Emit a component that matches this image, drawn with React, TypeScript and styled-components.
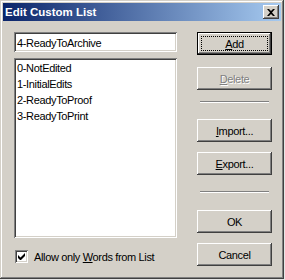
import styled, { createGlobalStyle } from "styled-components";

const GlobalStyle = createGlobalStyle`
  html, body {
    margin: 0;
    padding: 0;
    background: #e6e6e6;
  }
  * {
    box-sizing: border-box;
  }
`;

const items = ["0-NotEdited", "1-InitialEdits", "2-ReadyToProof", "3-ReadyToPrint"];

const App = () => {
  return (
    <>
      <GlobalStyle />
      <Window>
        <TitleBar>
          <span>Edit Custom List</span>
          <CloseBtn>
            <svg width="8" height="7" viewBox="0 0 8 7">
              <path d="M0 0h2l2 2 2-2h2L5 3.5 8 7H6L4 5 2 7H0l3-3.5z" fill="#000" />
            </svg>
          </CloseBtn>
        </TitleBar>
        <Body>
          <LeftCol>
            <TextBox>4-ReadyToArchive</TextBox>
            <ListBox>
              {items.map((item) => (
                <ListItem key={item}>{item}</ListItem>
              ))}
            </ListBox>
            <CheckRow>
              <CheckBox>
                <svg width="7" height="7" viewBox="0 0 7 7">
                  <path d="M0 2v3l2 2h1l4-4V0L2.5 4.5z" fill="#000" />
                </svg>
              </CheckBox>
              <Label>
                Allow only <u>W</u>ords from List
              </Label>
            </CheckRow>
          </LeftCol>
          <RightCol>
            <Button $default>
              <u>A</u>dd
            </Button>
            <Button $disabled $top={12}>
              <u>D</u>elete
            </Button>
            <Separator $top={11} />
            <Button $top={16}>
              <u>I</u>mport...
            </Button>
            <Button $top={10}>
              <u>E</u>xport...
            </Button>
            <Separator $top={16} />
            <Button $top={17}>OK</Button>
            <Button $top={10}>Cancel</Button>
          </RightCol>
        </Body>
      </Window>
    </>
  );
};

const Window = styled.div`
  width: 284px;
  height: 279px;
  padding: 3px;
  display: flex;
  flex-direction: column;
  background: #d4d0c8;
  box-shadow: inset -1px -1px #404040, inset 1px 1px #d4d0c8,
    inset -2px -2px #808080, inset 2px 2px #ffffff;
  font-family: "Liberation Sans", Arial, sans-serif;
  font-size: 11px;
  letter-spacing: -0.35px;
  color: #000;
`;

const TitleBar = styled.div`
  height: 18px;
  display: flex;
  align-items: center;
  justify-content: space-between;
  padding: 0 2px 0 2px;
  background: linear-gradient(to right, #0a246a, #a6caf0);
  color: #fff;
  font-weight: bold;
  font-size: 11.5px;
  letter-spacing: 0;
`;

const CloseBtn = styled.div`
  width: 16px;
  height: 14px;
  display: flex;
  align-items: center;
  justify-content: center;
  background: #d4d0c8;
  box-shadow: inset -1px -1px #404040, inset 1px 1px #ffffff,
    inset -2px -2px #808080, inset 2px 2px #d4d0c8;
`;

const Body = styled.div`
  flex: 1;
  display: flex;
  gap: 20px;
  padding: 11px 0 0 11px;
`;

const LeftCol = styled.div`
  width: 163px;
  display: flex;
  flex-direction: column;
`;

const sunken = `
  background: #fff;
  box-shadow: inset 1px 1px #808080, inset -1px -1px #ffffff,
    inset 2px 2px #404040, inset -2px -2px #d4d0c8;
`;

const TextBox = styled.div`
  ${sunken}
  height: 20px;
  padding: 1px 3px 0;
  display: flex;
  align-items: center;
`;

const ListBox = styled.div`
  ${sunken}
  height: 180px;
  margin-top: 6px;
  padding: 2px 3px;
`;

const ListItem = styled.div`
  height: 16px;
  line-height: 16px;
  white-space: nowrap;
`;

const CheckRow = styled.div`
  display: flex;
  align-items: center;
  margin-top: 12px;
  padding-left: 1px;
  gap: 6px;
`;

const CheckBox = styled.div`
  ${sunken}
  width: 13px;
  height: 13px;
  display: flex;
  align-items: center;
  justify-content: center;
`;

const Label = styled.span`
  white-space: nowrap;
  padding-top: 1px;
`;

const RightCol = styled.div`
  width: 75px;
  display: flex;
  flex-direction: column;
`;

const Button = styled.div<{ $default?: boolean; $disabled?: boolean; $top?: number }>`
  position: relative;
  height: 23px;
  margin-top: ${(p) => p.$top ?? 0}px;
  display: flex;
  align-items: center;
  justify-content: center;
  padding-top: 1px;
  background: #d4d0c8;
  color: ${(p) => (p.$disabled ? "#808080" : "#000")};
  text-shadow: ${(p) => (p.$disabled ? "1px 1px #ffffff" : "none")};
  box-shadow: ${(p) =>
    p.$default
      ? "inset 0 0 0 1px #000, inset -2px -2px #404040, inset 2px 2px #ffffff, inset -3px -3px #808080"
      : "inset -1px -1px #404040, inset 1px 1px #ffffff, inset -2px -2px #808080, inset 2px 2px #d4d0c8"};

  &::after {
    content: "";
    display: ${(p) => (p.$default ? "block" : "none")};
    position: absolute;
    inset: 4px;
    border: 1px dotted #000;
  }
`;

const Separator = styled.div<{ $top: number }>`
  height: 2px;
  margin: ${(p) => p.$top}px 3px 0 3px;
  border-top: 1px solid #808080;
  border-bottom: 1px solid #ffffff;
`;

export default App;
